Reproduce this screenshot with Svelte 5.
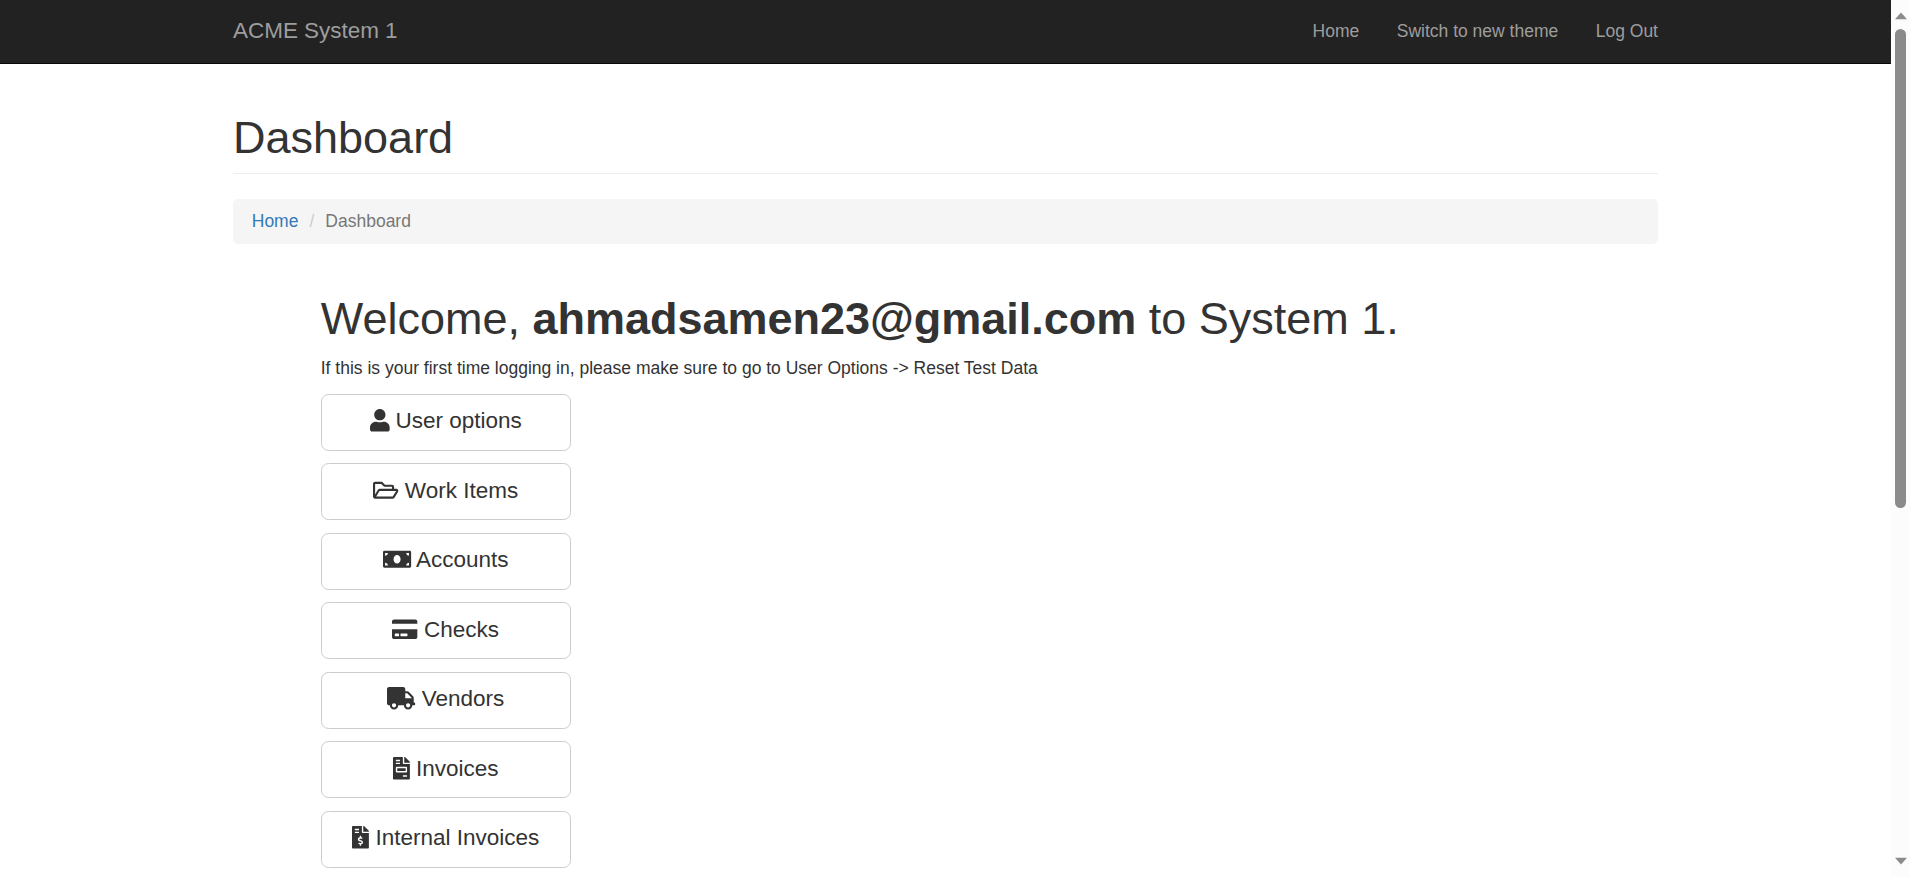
<script>
  const links = ['Home', 'Switch to new theme', 'Log Out'];

  const buttons = [
    { label: 'User options', w: 448, d: 'M224 256c70.7 0 128-57.3 128-128S294.7 0 224 0 96 57.3 96 128s57.3 128 128 128zm89.6 32h-16.7c-22.2 10.2-46.9 16-72.9 16s-50.6-5.8-72.9-16h-16.7C60.2 288 0 348.2 0 422.4V464c0 26.5 21.5 48 48 48h352c26.5 0 48-21.5 48-48v-41.6c0-74.2-60.2-134.4-134.4-134.4z' },
    { label: 'Work Items', w: 576, d: 'M527.9 224H480v-48c0-26.5-21.5-48-48-48H272l-64-64H48C21.5 64 0 85.5 0 112v288c0 26.5 21.5 48 48 48h400c16.5 0 31.9-8.5 40.7-22.6l79.9-128c20-31.9-3-73.4-40.7-73.4zM48 118c0-3.3 2.7-6 6-6h134.1l64 64H426c3.3 0 6 2.7 6 6v42H152c-16.8 0-32.4 8.8-41.1 23.2L48 351.4zm400 282H72l77.2-128H528z' },
    { label: 'Accounts', w: 640, d: 'M608 64H32C14.33 64 0 78.33 0 96v320c0 17.67 14.33 32 32 32h576c17.67 0 32-14.33 32-32V96c0-17.67-14.33-32-32-32zM48 400v-64c35.35 0 64 28.65 64 64H48zm0-224v-64h64c0 35.35-28.65 64-64 64zm272 176c-44.19 0-80-42.99-80-96 0-53.02 35.82-96 80-96s80 42.98 80 96c0 53.03-35.83 96-80 96zm272 48h-64c0-35.35 28.65-64 64-64v64zm0-224c-35.35 0-64-28.65-64-64h64v64z' },
    { label: 'Checks', w: 576, d: 'M0 432c0 26.5 21.5 48 48 48h480c26.5 0 48-21.5 48-48V256H0v176zm192-68c0-6.6 5.4-12 12-12h136c6.6 0 12 5.4 12 12v40c0 6.6-5.4 12-12 12H204c-6.6 0-12-5.4-12-12v-40zm-128 0c0-6.6 5.4-12 12-12h72c6.6 0 12 5.4 12 12v40c0 6.6-5.4 12-12 12H76c-6.6 0-12-5.4-12-12v-40zM576 80v48H0V80c0-26.5 21.5-48 48-48h480c26.5 0 48 21.5 48 48z' },
    { label: 'Vendors', w: 640, d: 'M624 352h-16V243.9c0-12.7-5.1-24.9-14.1-33.9L494 110.1c-9-9-21.2-14.1-33.9-14.1H416V48c0-26.5-21.5-48-48-48H48C21.5 0 0 21.5 0 48v320c0 26.5 21.5 48 48 48h16c0 53 43 96 96 96s96-43 96-96h128c0 53 43 96 96 96s96-43 96-96h48c8.8 0 16-7.2 16-16v-32c0-8.8-7.2-16-16-16zM160 464c-26.5 0-48-21.5-48-48s21.5-48 48-48 48 21.5 48 48-21.5 48-48 48zm320 0c-26.5 0-48-21.5-48-48s21.5-48 48-48 48 21.5 48 48-21.5 48-48 48zm80-208H416V144h44.1l99.9 99.9V256z' },
    { label: 'Invoices', w: 384, d: 'M288 256H96v64h192v-64zm89-151L279.1 7c-4.5-4.5-10.6-7-17-7H256v128h128v-6.1c0-6.3-2.5-12.4-7-16.9zm-153 31V0H24C10.7 0 0 10.7 0 24v464c0 13.3 10.7 24 24 24h336c13.3 0 24-10.7 24-24V160H248c-13.2 0-24-10.8-24-24zM64 72c0-4.42 3.58-8 8-8h80c4.42 0 8 3.58 8 8v16c0 4.42-3.58 8-8 8H72c-4.42 0-8-3.58-8-8V72zm0 64c0-4.42 3.58-8 8-8h80c4.42 0 8 3.58 8 8v16c0 4.42-3.58 8-8 8H72c-4.42 0-8-3.58-8-8v-16zm256 304c0 4.42-3.58 8-8 8h-80c-4.42 0-8-3.58-8-8v-16c0-4.42 3.58-8 8-8h80c4.42 0 8 3.58 8 8v16zm0-200v96c0 8.84-7.16 16-16 16H80c-8.84 0-16-7.16-16-16v-96c0-8.84 7.16-16 16-16h224c8.84 0 16 7.16 16 16z' },
    { label: 'Internal Invoices', w: 384, d: 'M377 105L279.1 7c-4.5-4.5-10.6-7-17-7H256v128h128v-6.1c0-6.3-2.5-12.4-7-16.9zm-153 31V0H24C10.7 0 0 10.7 0 24v464c0 13.3 10.7 24 24 24h336c13.3 0 24-10.7 24-24V160H248c-13.2 0-24-10.8-24-24zM64 72c0-4.42 3.58-8 8-8h80c4.42 0 8 3.58 8 8v16c0 4.42-3.58 8-8 8H72c-4.42 0-8-3.58-8-8V72zm0 80v-16c0-4.42 3.58-8 8-8h80c4.42 0 8 3.58 8 8v16c0 4.42-3.58 8-8 8H72c-4.42 0-8-3.58-8-8zm144 263.88V440c0 4.42-3.58 8-8 8h-16c-4.42 0-8-3.58-8-8v-24.29c-11.29-.58-22.27-4.52-31.37-11.35-3.9-2.93-4.1-8.77-.57-12.14l11.75-11.21c2.77-2.64 6.89-2.76 10.13-.73 3.87 2.42 8.26 3.72 12.82 3.72h28.11c6.5 0 11.8-5.92 11.8-13.19 0-5.95-3.61-11.19-8.77-12.73l-45-13.5c-18.59-5.58-31.58-23.42-31.58-43.39 0-24.52 19.05-44.44 42.67-45.07V232c0-4.42 3.58-8 8-8h16c4.42 0 8 3.58 8 8v24.29c11.29.58 22.27 4.51 31.37 11.35 3.9 2.93 4.1 8.77.57 12.14l-11.75 11.21c-2.77 2.64-6.89 2.76-10.13.73-3.87-2.43-8.26-3.72-12.82-3.72h-28.11c-6.5 0-11.8 5.92-11.8 13.19 0 5.95 3.61 11.19 8.77 12.73l45 13.5c18.59 5.58 31.58 23.42 31.58 43.39 0 24.53-19.05 44.44-42.67 45.07z' }
  ];
</script>

<div class="window">
  <div class="page">
    <nav class="navbar">
      <div class="container bar">
        <a class="brand" href="#home">ACME System 1</a>
        <div class="links">
          {#each links as link}
            <a href="#nav">{link}</a>
          {/each}
        </div>
      </div>
    </nav>

    <main class="container">
      <h1 class="page-header">Dashboard</h1>
      <ol class="breadcrumb">
        <li><a href="#home">Home</a></li>
        <li class="sep">/</li>
        <li class="active">Dashboard</li>
      </ol>

      <section class="content">
        <h1 class="welcome">Welcome, <b>ahmadsamen23@gmail.com</b> to System 1.</h1>
        <p>If this is your first time logging in, please make sure to go to User Options -&gt; Reset Test Data</p>
        <div class="buttons">
          {#each buttons as b}
            <button><svg style="width: {b.w / 512}em" viewBox="0 0 {b.w} 512" aria-hidden="true"><path d={b.d} /></svg> {b.label}</button>
          {/each}
        </div>
      </section>
    </main>
  </div>

  <div class="scrollbar">
    <svg class="arrow" viewBox="0 0 14 8"><path d="M7 0.5 13 7.2H1z" /></svg>
    <div class="thumb"></div>
    <svg class="arrow down" viewBox="0 0 14 8"><path d="M1 0.8h12L7 7.5z" /></svg>
  </div>
</div>

<style>
  :global(body) {
    margin: 0;
    overflow: hidden;
    background: #fff;
  }
  .window {
    display: flex;
    width: 1910px;
    height: 877px;
    overflow: hidden;
    font: 17.5px/25px "Liberation Sans", Arial, sans-serif;
    color: #333;
  }
  .page {
    width: 1891px;
    height: 877px;
    overflow: hidden;
  }
  a {
    text-decoration: none;
  }
  .container {
    width: 1425px;
    margin: 0 auto;
  }
  .navbar {
    height: 63px;
    background: #222;
    border-bottom: 1px solid #080808;
  }
  .bar {
    display: flex;
    align-items: center;
    justify-content: space-between;
    height: 62px;
  }
  .navbar a {
    color: #9d9d9d;
  }
  .navbar .brand {
    padding-bottom: 2px;
    font-size: 22.5px;
    letter-spacing: -0.04px;
  }
  .links {
    display: flex;
    gap: 37.5px;
  }
  .page-header {
    margin: 48.5px 0 25px;
    padding-bottom: 11px;
    border-bottom: 1px solid #eee;
    font-size: 45px;
    font-weight: 400;
    line-height: 49.5px;
  }
  .breadcrumb {
    display: flex;
    margin: 0;
    padding: 10px 18.75px;
    list-style: none;
    background: #f5f5f5;
    border-radius: 5px;
  }
  .breadcrumb a {
    color: #337ab7;
  }
  .sep {
    padding: 0 11px;
    color: #ccc;
  }
  .active {
    color: #777;
  }
  .content {
    padding: 50px 0 0 87.75px;
  }
  .welcome {
    margin: 0 0 12.5px;
    font-size: 45px;
    font-weight: 400;
    line-height: 49.5px;
    letter-spacing: -0.01px;
  }
  p {
    margin: 0 0 12.5px;
  }
  .buttons {
    display: flex;
    flex-direction: column;
    gap: 12.5px;
  }
  button {
    box-sizing: border-box;
    width: 250px;
    height: 57px;
    padding: 0 0 2px;
    background: #fff;
    border: 1px solid #ccc;
    border-radius: 7.5px;
    font: 22.5px/30px "Liberation Sans", Arial, sans-serif;
    color: #333;
    white-space: nowrap;
  }
  button svg {
    height: 1em;
    vertical-align: -0.16em;
    fill: currentColor;
    overflow: visible;
  }
  .scrollbar {
    display: flex;
    flex-direction: column;
    align-items: center;
    box-sizing: border-box;
    width: 19px;
    height: 877px;
    padding: 12px 0;
    background: #fcfcfc;
  }
  .arrow {
    width: 14px;
    height: 8px;
    fill: #8b8b8b;
  }
  .arrow.down {
    margin-top: auto;
  }
  .thumb {
    width: 11px;
    height: 479px;
    margin-top: 9px;
    background: #8b8b8b;
    border-radius: 6px;
  }
</style>
